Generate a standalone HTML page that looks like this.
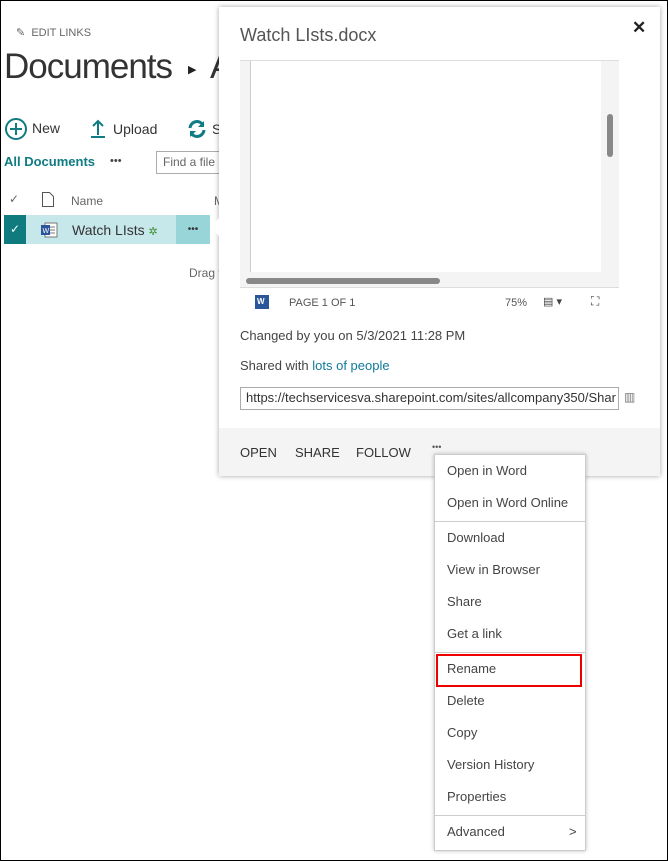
<!DOCTYPE html>
<html><head><style>
*{box-sizing:border-box;margin:0;padding:0}
body{width:668px;height:861px;position:relative;overflow:hidden;background:#fff;font-family:"Segoe UI","Liberation Sans",sans-serif;color:#333}
.a{position:absolute;white-space:nowrap}
.mi{position:absolute;left:12px;font-size:13px;color:#444}
</style></head><body>
<div class="a" style="left:16px;top:26px;font-size:11px;color:#666">✎&nbsp;&nbsp;EDIT LINKS</div>
<div class="a" style="left:4px;top:47px;font-size:35px;font-weight:300;color:#333;letter-spacing:-1px">Documents</div>
<div class="a" style="left:188px;top:63px;font-size:11px;color:#222">▶</div>
<div class="a" style="left:210px;top:47px;font-size:35px;font-weight:300;color:#333">A</div>
<svg class="a" style="left:4px;top:117px" width="24" height="24"><circle cx="12" cy="12" r="10" fill="none" stroke="#0f7b82" stroke-width="2"/><path d="M12 6v12M6 12h12" stroke="#0f7b82" stroke-width="2"/></svg>
<div class="a" style="left:32px;top:120px;font-size:14px">New</div>
<svg class="a" style="left:90px;top:119px" width="16" height="20"><path d="M8 2v14M3 7l5-5 5 5M1 18h14" stroke="#0f7b82" stroke-width="2" fill="none"/></svg>
<div class="a" style="left:113px;top:121px;font-size:14px">Upload</div>
<svg class="a" style="left:187px;top:119px" width="20" height="20"><path d="M3 9a7 7 0 0 1 13-3M17 11a7 7 0 0 1-13 3" stroke="#0f7b82" stroke-width="3" fill="none"/><path d="M17 2v6h-6zM3 18v-6h6z" fill="#0f7b82"/></svg>
<div class="a" style="left:212px;top:121px;font-size:14px">S</div>
<div class="a" style="left:4px;top:154px;font-size:13px;color:#0f7b82;font-weight:600">All Documents</div>
<div class="a" style="left:110px;top:155px;font-size:11px;color:#444">•••</div>
<div class="a" style="left:156px;top:151px;width:80px;height:23px;border:1px solid #ababab;font-size:12px;color:#666;padding:3px 6px">Find a file</div>
<div class="a" style="left:9px;top:192px;font-size:12px;color:#666">✓</div>
<svg class="a" style="left:42px;top:192px" width="12" height="15"><path d="M.5.5h7l4 4v10H.5z" fill="none" stroke="#555"/></svg>
<div class="a" style="left:71px;top:194px;font-size:12px;color:#666">Name</div>
<div class="a" style="left:214px;top:194px;font-size:12px;color:#666">M</div>
<div class="a" style="left:4px;top:215px;width:22px;height:29px;background:#0f7b7f;color:#fff;font-size:12px;text-align:center;line-height:29px">✓</div>
<div class="a" style="left:26px;top:215px;width:150px;height:29px;background:#c7e8ea"></div>
<div class="a" style="left:176px;top:215px;width:34px;height:29px;background:#98d5d8;font-size:10px;text-align:center;line-height:29px;color:#333">•••</div>
<svg class="a" style="left:40px;top:222px" width="18" height="16"><rect x="5" y="1" width="12" height="14" fill="#fff" stroke="#777"/><path d="M9 5h6M9 8h6M9 11h6" stroke="#777"/><rect x="1" y="3" width="9" height="10" fill="#2b579a"/><text x="2.5" y="11" font-size="7" fill="#fff" font-family="Liberation Sans">W</text></svg>
<div class="a" style="left:72px;top:222px;font-size:14px;color:#333">Watch LIsts <span style="color:#3a8e2e;font-size:11px">✲</span></div>
<div class="a" style="left:189px;top:266px;font-size:12px;color:#666">Drag f</div>

<div class="a" style="left:219px;top:7px;width:441px;height:469px;background:#fff;box-shadow:0 0 5px rgba(0,0,0,.35)">
 <div class="a" style="left:-9px;top:211px;width:0;height:0;border-top:9px solid transparent;border-bottom:9px solid transparent;border-right:9px solid #fff"></div>
 <div class="a" style="left:21px;top:18px;font-size:18px;font-weight:300;color:#555">Watch LIsts.docx</div>
 <div class="a" style="left:413px;top:11px;font-size:17px;font-weight:bold;color:#222">✕</div>
 <div class="a" style="left:21px;top:53px;width:379px;height:253px;background:#f4f4f4;border-top:1px solid #ddd">
  <div class="a" style="left:10px;top:0;width:351px;height:211px;background:#fff;border-left:1px solid #ccc"></div>
  <div class="a" style="left:367px;top:53px;width:6px;height:43px;border-radius:3px;background:#888"></div>
  <div class="a" style="left:6px;top:217px;width:194px;height:6px;border-radius:3px;background:#888"></div>
  <div class="a" style="left:0;top:226px;width:379px;height:27px;background:#fff;border-top:1px solid #ddd"></div>
  <div class="a" style="left:15px;top:234px;width:14px;height:14px;background:#2b579a;color:#fff;font-size:8px;font-weight:bold;padding-left:2px;line-height:14px">W</div>
  <div class="a" style="left:49px;top:236px;font-size:11px;color:#555">PAGE 1 OF 1</div>
  <div class="a" style="left:265px;top:236px;font-size:11px;color:#555">75%</div>
  <div class="a" style="left:303px;top:234px;font-size:11px;color:#444">▤ ▾</div>
  <div class="a" style="left:351px;top:233px;font-size:12px;color:#444">⛶</div>
 </div>
 <div class="a" style="left:21px;top:321px;font-size:13px;color:#444">Changed by you on 5/3/2021 11:28 PM</div>
 <div class="a" style="left:21px;top:351px;font-size:13px;color:#444">Shared with <span style="color:#0f7b9a">lots of people</span></div>
 <div class="a" style="left:21px;top:380px;width:379px;height:23px;border:1px solid #ababab;font-size:13px;color:#333;padding:2px 5px;overflow:hidden">https://techservicesva.sharepoint.com/sites/allcompany350/Shar</div>
 <div class="a" style="left:405px;top:383px;font-size:12px;color:#777">▥</div>
 <div class="a" style="left:0;top:421px;width:441px;height:48px;background:#f4f4f4"></div>
 <div class="a" style="left:21px;top:438px;font-size:13px;color:#333">OPEN</div>
 <div class="a" style="left:76px;top:438px;font-size:13px;color:#333">SHARE</div>
 <div class="a" style="left:137px;top:438px;font-size:13px;color:#333">FOLLOW</div>
 <div class="a" style="left:213px;top:435px;font-size:9px;color:#555">•••</div>
</div>

<div class="a" style="left:434px;top:454px;width:152px;height:397px;background:#fff;border:1px solid #ccc;box-shadow:0 0 4px rgba(0,0,0,.25)">
 <div class="mi" style="top:8px">Open in Word</div>
 <div class="mi" style="top:40px">Open in Word Online</div>
 <div class="a" style="left:0;top:66px;width:150px;height:1px;background:#ccc"></div>
 <div class="mi" style="top:75px">Download</div>
 <div class="mi" style="top:107px">View in Browser</div>
 <div class="mi" style="top:139px">Share</div>
 <div class="mi" style="top:171px">Get a link</div>
 <div class="a" style="left:0;top:197px;width:150px;height:1px;background:#ccc"></div>
 <div class="a" style="left:1px;top:199px;width:146px;height:33px;border:2px solid #e00"></div>
 <div class="mi" style="top:206px">Rename</div>
 <div class="mi" style="top:238px">Delete</div>
 <div class="mi" style="top:270px">Copy</div>
 <div class="mi" style="top:302px">Version History</div>
 <div class="mi" style="top:334px">Properties</div>
 <div class="a" style="left:0;top:360px;width:150px;height:1px;background:#ccc"></div>
 <div class="mi" style="top:369px">Advanced</div>
 <div class="a" style="left:134px;top:369px;font-size:13px;color:#444">&gt;</div>
</div>
<div class="a" style="left:0;top:0;width:668px;height:861px;border:1px solid #000"></div>
</body></html>
